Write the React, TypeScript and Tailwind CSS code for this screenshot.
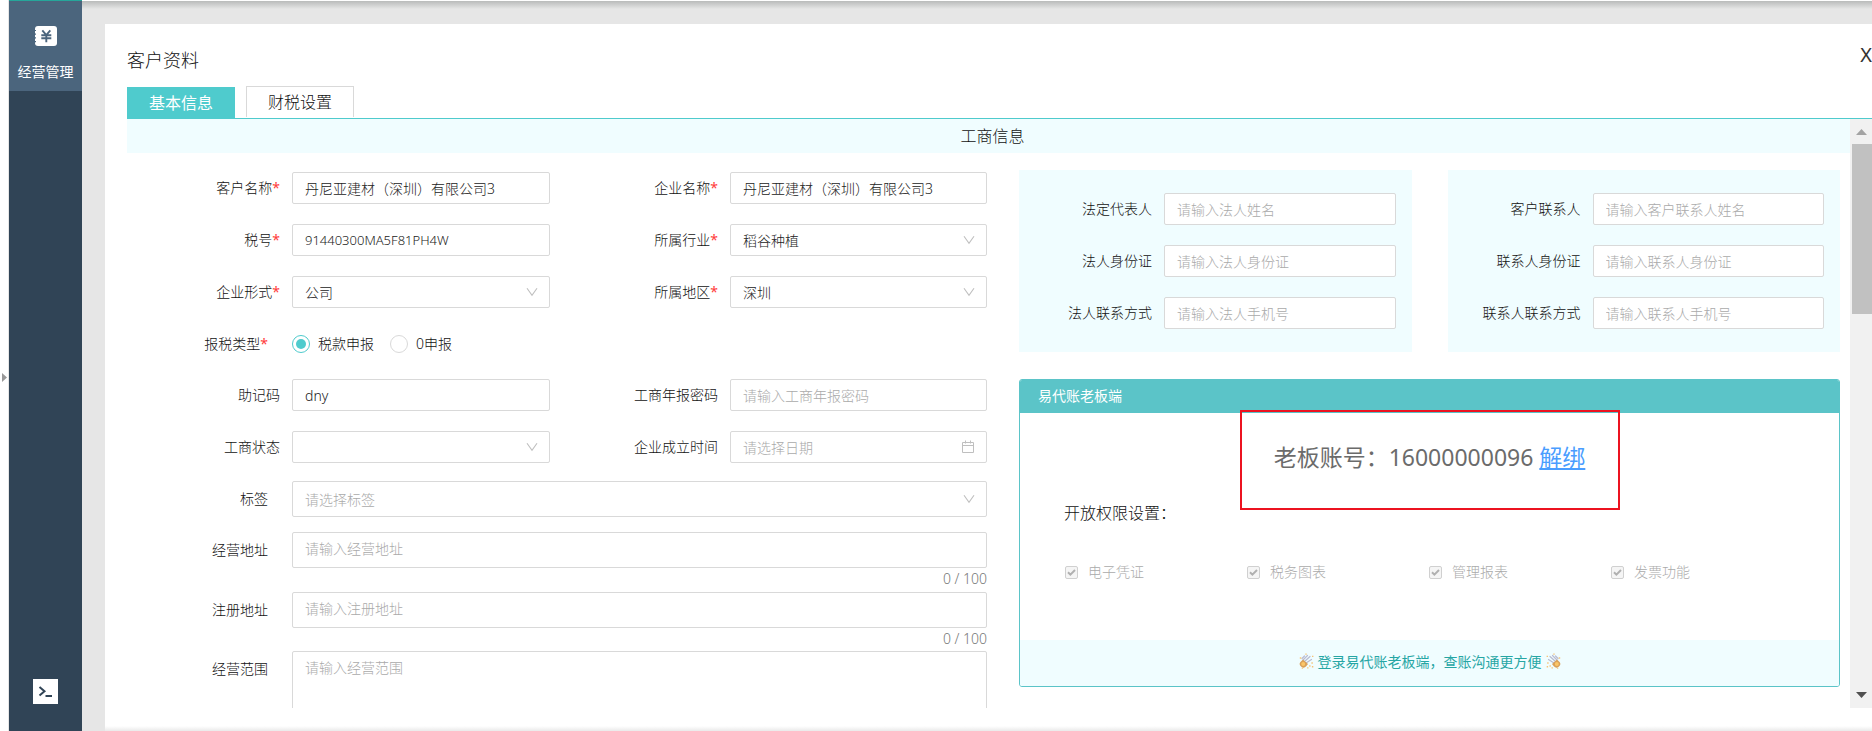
import type { ReactNode } from 'react'

function Chevron() {
  return (
    <svg
      className="pointer-events-none absolute right-3 top-1/2 h-3 w-3 -translate-y-1/2 text-[#bfbfbf]"
      viewBox="0 0 12 12"
      fill="none"
      stroke="currentColor"
      aria-hidden="true"
    >
      <path d="M1 2.2 6 9.4 11 2.2" strokeWidth="1.1" />
    </svg>
  )
}

function CalendarIcon() {
  return (
    <svg
      className="pointer-events-none absolute right-3 top-1/2 h-[14px] w-[14px] -translate-y-1/2 text-[#bfbfbf]"
      viewBox="0 0 14 14"
      fill="none"
      stroke="currentColor"
      aria-hidden="true"
    >
      <path d="M1.5 2.5h11v10h-11zM1.5 5.5h11M4.5 .5v3M9.5 .5v3" />
    </svg>
  )
}

function YenIcon() {
  return (
    <svg className="h-5 w-[23px]" viewBox="0 0 23 20" aria-hidden="true">
      <rect x="1" width="22" height="20" rx="3" fill="#fff" />
      <path d="M0 4.5h2M0 8.2h2M0 11.9h2M0 15.6h2" stroke="#4b657d" strokeWidth="1.2" />
      <path
        d="M8.3 4.3 12.3 9l4-4.7M7.3 9.2h10M7.3 12.3h10M12.3 9v7.2"
        fill="none"
        stroke="#4b657d"
        strokeWidth="1.9"
      />
    </svg>
  )
}

function ConsoleIcon() {
  return (
    <svg className="h-[25px] w-[25px]" viewBox="0 0 25 25" aria-hidden="true">
      <rect width="25" height="25" fill="#fff" />
      <path d="M6.5 8 11.5 12.3 6.5 16.6M12.5 17h6.5" fill="none" stroke="#304456" strokeWidth="2" />
    </svg>
  )
}

function ClapIcon({ flip = false }: { flip?: boolean }) {
  return (
    <svg className={flip ? 'h-4 w-4 -scale-x-100' : 'h-4 w-4'} viewBox="0 0 16 16" aria-hidden="true">
      <path d="M5 7 9.5 2.5M6.5 8.5 12 3.5M8 10 13.5 6.5M4 5.5 6.5 3" stroke="#b9bbd2" strokeWidth="1.2" strokeLinecap="round" />
      <path d="M2.2 9.2 5 6.5 10 11 8.2 13.2a3.6 3.6 0 0 1-5.2.2 3.2 3.2 0 0 1-.8-4.2Z" fill="#d9a05a" />
      <circle cx="5.2" cy="11" r="2" fill="#fbc668" />
      <path d="M8 .4v1.4M1.8 5h1.5M14 3.4h1.4M13.4 10h1.4M11.4 12.4l1 1M4.4 14.8v1M9.8 14.2v1.4M14.6 13v1.4" stroke="#f7c376" strokeWidth="1.4" />
    </svg>
  )
}

type FieldProps = {
  id: string
  label: string
  required?: boolean
  labelClass: string
  children: ReactNode
}

function Field({ id, label, required, labelClass, children }: FieldProps) {
  return (
    <div className="flex items-start">
      <label htmlFor={id} className={`shrink-0 text-right leading-8 whitespace-nowrap ${labelClass}`}>
        {label}
        {required && <span className="font-normal text-[#ff3b3b]">*</span>}
      </label>
      <div className="relative min-w-0 flex-1">{children}</div>
    </div>
  )
}

const control =
  'block w-full rounded-xs border border-[#d9d9d9] bg-white px-3 text-[#222] placeholder:text-[#aaa] outline-none focus:border-[#4fcbcd]'

function TextInput({ id, value, placeholder }: { id: string; value?: string; placeholder?: string }) {
  return <input id={id} type="text" defaultValue={value} placeholder={placeholder} className={`${control} h-8`} />
}

function SelectInput({ id, value }: { id: string; value: string }) {
  return (
    <>
      <select id={id} defaultValue={value} className={`${control} h-8 appearance-none`}>
        <option value={value}>{value}</option>
      </select>
      <Chevron />
    </>
  )
}

const left = 'w-[165px] pr-3'
const middle = 'w-[180px] pr-3'
const wide = 'w-[165px] pr-6'

const radio =
  'h-[18px] w-[18px] appearance-none rounded-full border border-[#d9d9d9] bg-white p-[3px] checked:border-[#4fcbcd] checked:bg-[#4fcbcd] checked:bg-clip-content'

function CompanyForm() {
  return (
    <div className="pt-[19px]">
      <div className="grid grid-cols-[423fr_437fr] gap-y-5">
        <Field id="customer" label="客户名称" required labelClass={left}>
          <TextInput id="customer" value="丹尼亚建材（深圳）有限公司3" />
        </Field>
        <Field id="company" label="企业名称" required labelClass={middle}>
          <TextInput id="company" value="丹尼亚建材（深圳）有限公司3" />
        </Field>
        <Field id="taxNo" label="税号" required labelClass={left}>
          <input id="taxNo" type="text" defaultValue="91440300MA5F81PH4W" className={`${control} h-8 text-[13px]`} />
        </Field>
        <Field id="industry" label="所属行业" required labelClass={middle}>
          <SelectInput id="industry" value="稻谷种植" />
        </Field>
        <Field id="companyType" label="企业形式" required labelClass={left}>
          <SelectInput id="companyType" value="公司" />
        </Field>
        <Field id="region" label="所属地区" required labelClass={middle}>
          <SelectInput id="region" value="深圳" />
        </Field>

        <fieldset className="col-span-2 flex h-[31px] items-center">
          <legend className={`float-left ${wide} text-right`}>
            报税类型<span className="font-normal text-[#ff3b3b]">*</span>
          </legend>
          <label className="mr-4 flex items-center gap-2">
            <input type="radio" name="declare" defaultChecked className={radio} />
            税款申报
          </label>
          <label className="flex items-center gap-2">
            <input type="radio" name="declare" className={radio} />
            0申报
          </label>
        </fieldset>

        <Field id="mnemonic" label="助记码" labelClass={left}>
          <TextInput id="mnemonic" value="dny" />
        </Field>
        <Field id="reportPwd" label="工商年报密码" labelClass={middle}>
          <TextInput id="reportPwd" placeholder="请输入工商年报密码" />
        </Field>
        <Field id="status" label="工商状态" labelClass={left}>
          <SelectInput id="status" value="" />
        </Field>
        <Field id="founded" label="企业成立时间" labelClass={middle}>
          <TextInput id="founded" placeholder="请选择日期" />
          <CalendarIcon />
        </Field>
      </div>

      <div className="mt-[18px]">
        <Field id="tags" label="标签" labelClass={`${wide} pt-[2px]`}>
          <select id="tags" defaultValue="" className={`${control} h-9 appearance-none text-[#aaa]!`}>
            <option value="">请选择标签</option>
          </select>
          <Chevron />
        </Field>
      </div>
      <div className="mt-[15px]">
        <Field id="bizAddress" label="经营地址" labelClass={`${wide} pt-[2px]`}>
          <textarea id="bizAddress" rows={1} placeholder="请输入经营地址" className={`${control} h-9 resize-none py-1 leading-6`} />
          <div className="h-6 text-right leading-[22px] text-[#777]">0 / 100</div>
        </Field>
        <Field id="regAddress" label="注册地址" labelClass={`${wide} pt-[2px]`}>
          <textarea id="regAddress" rows={1} placeholder="请输入注册地址" className={`${control} h-9 resize-none py-1 leading-6`} />
          <div className="h-[23px] text-right leading-[22px] text-[#777]">0 / 100</div>
        </Field>
        <Field id="scope" label="经营范围" labelClass={`${wide} pt-[2px]`}>
          <textarea id="scope" rows={4} placeholder="请输入经营范围" className={`${control} resize-none py-1 leading-6`} />
        </Field>
      </div>
    </div>
  )
}

const contactCards = [
  [
    { id: 'legalName', label: '法定代表人', placeholder: '请输入法人姓名' },
    { id: 'legalId', label: '法人身份证', placeholder: '请输入法人身份证' },
    { id: 'legalPhone', label: '法人联系方式', placeholder: '请输入法人手机号' },
  ],
  [
    { id: 'contactName', label: '客户联系人', placeholder: '请输入客户联系人姓名' },
    { id: 'contactId', label: '联系人身份证', placeholder: '请输入联系人身份证' },
    { id: 'contactPhone', label: '联系人联系方式', placeholder: '请输入联系人手机号' },
  ],
]

const permissions = ['电子凭证', '税务图表', '管理报表', '发票功能']

function BossPanel() {
  return (
    <section className="mt-[27px] overflow-hidden rounded-[3px] border border-[#5bc4c8] bg-white">
      <h2 className="h-[33px] bg-[#5bc4c8] pl-[18px] font-normal leading-8 text-white">易代账老板端</h2>
      <div className="relative h-[227px]">
        {/* highlight around the bound account */}
        <div className="absolute -top-[3px] left-1/2 h-[100px] w-[380px] -translate-x-1/2 border-2 border-[#ec1320]" />
        <p className="pt-7 text-center text-[23px] font-normal leading-8 text-[#6b6b6b]">
          老板账号：16000000096{' '}
          <a href="#unbind" className="relative text-[#4a9dff] underline">
            解绑
          </a>
        </p>
        <p className="mt-7 pl-11 text-base leading-6">开放权限设置：</p>
        <div className="mt-[35px] grid grid-cols-4 pl-[45px] pr-[46px]">
          {permissions.map((name) => (
            <label key={name} className="flex items-center gap-[10px] leading-6 text-[#aaa]">
              <span className="relative h-[13px] w-[13px]">
                <input
                  type="checkbox"
                  defaultChecked
                  disabled
                  className="block h-[13px] w-[13px] appearance-none rounded-xs border border-[#d0d0d0] bg-[#f5f5f5]"
                />
                <svg className="pointer-events-none absolute inset-0" viewBox="0 0 13 13" fill="none" stroke="#b0b0b0" aria-hidden="true">
                  <path d="M3 6.2 5.4 8.6 10 4" strokeWidth="2" />
                </svg>
              </span>
              {name}
            </label>
          ))}
        </div>
      </div>
      <div className="flex h-[46px] items-center justify-center gap-1 bg-[#f0fdff] pb-1 font-normal text-[#26a6a4]">
        <ClapIcon />
        登录易代账老板端，查账沟通更方便
        <ClapIcon flip />
      </div>
    </section>
  )
}

function Scrollbar() {
  return (
    <div className="flex w-[22px] shrink-0 flex-col items-center bg-[#f1f1f1]" aria-hidden="true">
      <svg className="mt-[10px] mb-[9px] h-[6px] w-[11px]" viewBox="0 0 11 6">
        <path d="M0 6 5.5 0 11 6z" fill="#a3a3a3" />
      </svg>
      <div className="h-[170px] w-5 self-end bg-[#c1c1c1]" />
      <svg className="mt-auto mb-[10px] h-[6px] w-[11px]" viewBox="0 0 11 6">
        <path d="M0 0h11L5.5 6z" fill="#505050" />
      </svg>
    </div>
  )
}

export default function App() {
  return (
    <div className="flex h-screen overflow-hidden bg-white font-['Noto_Sans','Noto_Sans_CJK_SC',sans-serif] text-[14px] font-light text-[#111]">
      <div className="flex w-[9px] shrink-0 items-center justify-center border-r border-[#e6e6e6]">
        <svg className="mt-6 h-[9px] w-[5px]" viewBox="0 0 5 9" aria-hidden="true">
          <path d="M0 0 5 4.5 0 9z" fill="#999" />
        </svg>
      </div>

      <nav className="flex w-[73px] shrink-0 flex-col items-center justify-between border-t border-[#26a69a] bg-[#304456] pb-[27px]">
        <a href="#operation" className="flex h-[90px] w-full flex-col items-center gap-[14px] bg-[#4b657d] pt-[25px] font-normal text-white">
          <YenIcon />
          <span className="leading-6">经营管理</span>
        </a>
        <button type="button" aria-label="控制台">
          <ConsoleIcon />
        </button>
      </nav>

      <div className="flex min-w-0 flex-1 flex-col border-t border-white bg-[#e6e6e6]">
        <div className="h-[23px] shrink-0 bg-linear-to-b from-[#b9bbba] to-transparent to-35%" />
        <main className="ml-[23px] flex min-h-0 flex-1 flex-col bg-white pl-[22px]">
          <header className="flex h-[62px] shrink-0 justify-between pt-[22px]">
            <h1 className="text-lg leading-7">客户资料</h1>
            <button type="button" aria-label="关闭" className="-mt-[5px] h-7 text-[20px] font-normal leading-7 text-[#333]">
              X
            </button>
          </header>
          <div role="tablist" className="flex h-[33px] shrink-0 items-end gap-[11px] border-b border-[#4fcbcd] text-base">
            <button type="button" role="tab" aria-selected="true" className="h-[31px] w-[108px] bg-[#4fcbcd] font-normal text-white">
              基本信息
            </button>
            <button
              type="button"
              role="tab"
              aria-selected="false"
              className="mb-px h-[31px] w-[108px] border border-b-0 border-[#d9d9d9] bg-white"
            >
              财税设置
            </button>
          </div>

          <div className="flex min-h-0 flex-1">
            <div className="min-w-0 flex-1 overflow-hidden">
              <h2 className="h-[34px] bg-[#f0fdff] pl-2 text-center text-base leading-[34px]">工商信息</h2>
              <div className="grid grid-cols-[860fr_821fr] gap-x-8 pr-[10px]">
                <CompanyForm />
                <div className="pt-[17px]">
                  <div className="grid grid-cols-2 gap-9">
                    {contactCards.map((fields) => (
                      <div key={fields[0].id} className="flex flex-col gap-5 bg-[#f0fdff] py-[23px] pr-4">
                        {fields.map((f) => (
                          <Field key={f.id} id={f.id} label={f.label} labelClass="w-[145px] pr-3">
                            <TextInput id={f.id} placeholder={f.placeholder} />
                          </Field>
                        ))}
                      </div>
                    ))}
                  </div>
                  <BossPanel />
                </div>
              </div>
            </div>
            <Scrollbar />
          </div>
          <div className="-ml-[22px] flex h-[23px] shrink-0 items-end">
            <div className="h-[5px] w-full bg-linear-to-b from-white to-[#eaeaea]" />
          </div>
        </main>
      </div>
    </div>
  )
}
